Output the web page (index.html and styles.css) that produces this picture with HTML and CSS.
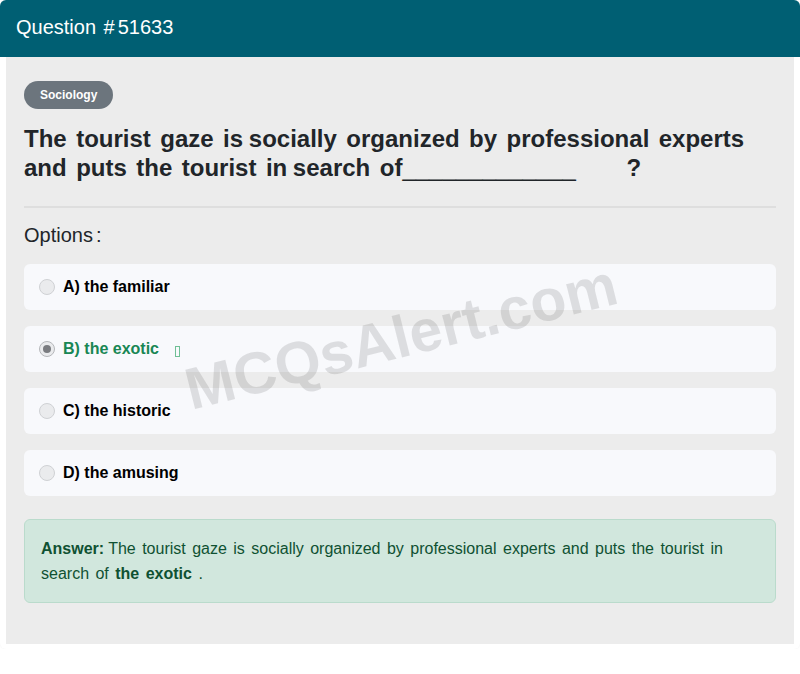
FILE: index.html
```html
<!DOCTYPE html>
<html lang="en">
<head>
<meta charset="utf-8">
<title>Question #51633</title>
<link rel="stylesheet" href="styles.css">
</head>
<body>
<div class="card">
  <div class="card-header">Question <span class="hash">#</span>51633</div>
  <div class="card-body">
    <span class="badge">Sociology</span>
    <h2 class="question">The tourist gaze <span class="tight">is socially</span> organized by professional experts and puts the tourist <span class="tight">in search</span> of<span class="blank">_____________</span> <span class="qmark">?</span></h2>
    <hr class="divider">
    <div class="options-title">Options<span class="colon">:</span></div>
    <div class="options">
      <div class="option"><span class="radio"></span><span class="opt-text">A) the familiar</span></div>
      <div class="option correct"><span class="radio checked"></span><span class="opt-text">B) the exotic</span><span class="tofu"></span></div>
      <div class="option"><span class="radio"></span><span class="opt-text">C) the historic</span></div>
      <div class="option"><span class="radio"></span><span class="opt-text">D) the amusing</span></div>
    </div>
    <div class="answer"><b class="label">Answer:</b>The tourist gaze is socially organized by professional experts and puts the tourist in search of <b>the exotic</b> .</div>
    <div class="watermark">MCQsAlert.com</div>
  </div>
</div>
</body>
</html>
```
FILE: styles.css
```css
* { box-sizing: border-box; }
html, body { margin: 0; padding: 0; background: #ffffff; }
body { font-family: "Liberation Sans", Arial, sans-serif; color: #212529; }

.card {
  width: 800px;
  border-radius: 6px;
  overflow: hidden;
  background: #ffffff;
  padding-bottom: 5px;
  box-shadow: 0 0 2px rgba(0, 0, 0, 0.06);
}

.card-header {
  height: 57px;
  background: #005f73;
  color: #ffffff;
  font-size: 20px;
  line-height: 20px;
  padding: 17px 16px 0;
}
.hash { margin-left: 2px; margin-right: 3px; }

.card-body {
  position: relative;
  margin: 0 6px;
  background: #ececec;
  padding: 24px 18px 41px;
}

.badge {
  display: inline-block;
  height: 28px;
  line-height: 28px;
  padding: 0 16px;
  border-radius: 14px;
  background: #6c757d;
  color: #ffffff;
  font-size: 12px;
  font-weight: bold;
  vertical-align: top;
}

.question {
  margin: 15px 0 0;
  font-size: 24px;
  line-height: 29px;
  font-weight: bold;
  word-spacing: 2.8px;
  color: #212529;
}
.tight { word-spacing: -1px; }
.blank { font-weight: normal; }
.qmark { margin-left: 41px; }

.divider {
  margin: 24px 0 0;
  border: 0;
  border-top: 2px solid #dedede;
}

.options-title {
  margin-top: 12px;
  font-size: 20px;
  line-height: 30px;
  color: #212529;
}
.colon { margin-left: 3px; }

.options {
  margin-top: 14px;
  display: flex;
  flex-direction: column;
  gap: 16px;
}

.option {
  display: flex;
  align-items: center;
  height: 46px;
  padding-left: 15px;
  background: #f8f9fc;
  border-radius: 6px;
  font-size: 16px;
  font-weight: bold;
  color: #000000;
}

.radio {
  width: 16px;
  height: 16px;
  border-radius: 50%;
  border: 1px solid #cfd1d4;
  background: #eaebed;
  margin-right: 8px;
  flex: none;
}
.radio.checked {
  border: 1px solid #b5b7ba;
  background: #eaebed;
  position: relative;
}
.radio.checked::after {
  content: "";
  position: absolute;
  left: 3px;
  top: 3px;
  width: 8px;
  height: 8px;
  border-radius: 50%;
  background: #7a7c80;
}

.option.correct .opt-text { color: #198754; }
.tofu {
  display: inline-block;
  width: 5px;
  height: 11px;
  border: 1px solid #6fbf95;
  margin-left: 16px;
  margin-top: 4px;
}

.answer {
  margin-top: 23px;
  padding: 16px;
  background: #d1e7dd;
  border: 1px solid #badbcc;
  border-radius: 6px;
  color: #0f5132;
  font-size: 16px;
  line-height: 25px;
  word-spacing: 2px;
}
.answer b { font-weight: bold; }
.answer .label { margin-right: 4px; }

.watermark {
  position: absolute;
  left: 174px;
  top: 251px;
  font-size: 59px;
  font-weight: bold;
  color: rgba(0, 0, 0, 0.11);
  transform: rotate(-14deg);
  white-space: nowrap;
  pointer-events: none;
  line-height: 1;
}
```
